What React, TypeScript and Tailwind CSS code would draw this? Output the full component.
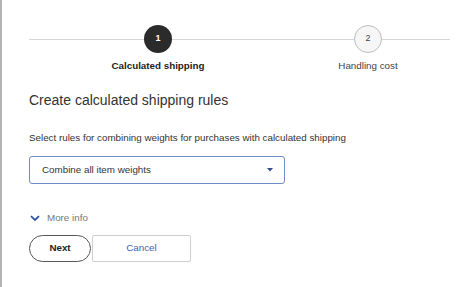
import React from "react";

export default function App() {
  return (
    <div
      className="w-[474px] h-[287px] bg-white border-l-2 border-[#b4b4b4] overflow-hidden text-[#333333]"
      style={{ fontFamily: '"Liberation Sans", Arial, sans-serif' }}
    >
      <div className="pl-[27px] pr-[24px]">
        {/* Stepper */}
        <div className="pt-[25px] flex items-start">
          <div className="w-[115px] h-px bg-[#d6d6d6] mt-[14px]" />
          <div className="w-[28px] flex flex-col items-center">
            <div className="w-[28px] h-[28px] rounded-full bg-[#2b2b2b] text-white text-[9px] font-bold flex items-center justify-center">
              1
            </div>
            <div className="mt-[6px] text-[9.8px] leading-[14px] font-bold text-[#222] whitespace-nowrap">
              Calculated shipping
            </div>
          </div>
          <div className="w-[182px] h-px bg-[#d6d6d6] mt-[14px]" />
          <div className="w-[28px] flex flex-col items-center">
            <div className="w-[28px] h-[28px] rounded-full bg-[#f6f6f6] border-[1.5px] border-[#bdbdbd] text-[#444] text-[9px] flex items-center justify-center">
              2
            </div>
            <div className="mt-[6px] text-[9.8px] leading-[14px] text-[#444] whitespace-nowrap">
              Handling cost
            </div>
          </div>
          <div className="w-[68px] h-px bg-[#d6d6d6] mt-[14px]" />
        </div>

        {/* Heading */}
        <h1 className="mt-[17px] text-[14px] leading-[20px] text-[#333]">
          Create calculated shipping rules
        </h1>

        <p className="mt-[22px] text-[9.8px] leading-[12px] text-[#333]">
          Select rules for combining weights for purchases with calculated shipping
        </p>

        {/* Dropdown */}
        <div className="mt-[12px] w-[256px] h-[28px] border border-[#6f8bcb] rounded-[3px] flex items-center justify-between pl-[12px] pr-[11px]">
          <span className="text-[9.8px] text-[#333]">Combine all item weights</span>
          <svg width="6" height="4" viewBox="0 0 6 4">
            <path d="M0 0 L6 0 L3 3.5 Z" fill="#2f4f8f" />
          </svg>
        </div>

        {/* More info */}
        <div className="mt-[27px] flex items-center gap-[7px]">
          <svg width="10" height="7" viewBox="0 0 10 7" className="ml-[1px]">
            <path d="M1 1.2 L5 5 L9 1.2" fill="none" stroke="#2f55a4" strokeWidth="1.8" />
          </svg>
          <span className="text-[9.8px] text-[#777]">More info</span>
        </div>

        {/* Buttons */}
        <div className="mt-[9px] flex items-start">
          <button className="w-[62px] h-[27px] rounded-full border border-[#555] bg-white text-[9.8px] font-bold text-[#222] flex items-center justify-center">
            Next
          </button>
          <button className="ml-px w-[99px] h-[27px] rounded-[2px] border border-[#cfcfcf] bg-white text-[9.8px] text-[#3a62b4] flex items-center justify-center">
            Cancel
          </button>
        </div>
      </div>
    </div>
  );
}
